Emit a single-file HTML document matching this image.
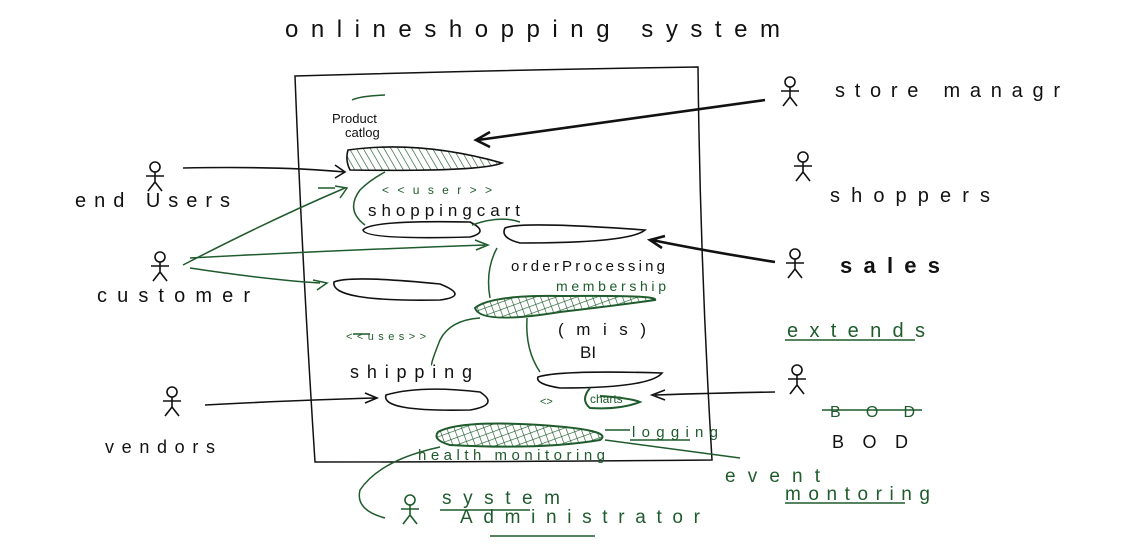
<!DOCTYPE html>
<html><head><meta charset="utf-8"><style>
html,body{margin:0;padding:0;background:#fff;}
svg{display:block}
text{font-family:"Liberation Sans",sans-serif;}
.k{fill:#111}
.g{fill:#1f5b2c}
</style></head><body>
<svg width="1125" height="555" viewBox="0 0 1125 555" xmlns="http://www.w3.org/2000/svg">
<defs>
<pattern id="h" width="6" height="6" patternUnits="userSpaceOnUse" patternTransform="rotate(-30)"><line x1="0" y1="0" x2="0" y2="6" stroke="#1f5b2c" stroke-width="1.3"/></pattern>
<pattern id="x" width="7" height="7" patternUnits="userSpaceOnUse" patternTransform="rotate(-20)"><path d="M0 0V7M0 0H7" stroke="#1f5b2c" stroke-width="1.3"/></pattern>
<g id="act" fill="none" stroke-width="1.6"><circle cx="0" cy="-8" r="5"/><path d="M0 -3V7M-9 1H9M0 7L-7 16M0 7L7 16"/></g>
</defs>
<text x="285" y="37" class="k" font-size="24" textLength="495" lengthAdjust="spacing">onlineshopping  system</text>
<path d="M295 76 Q500 70 698 67 Q700 260 712 460 Q500 462 315 462 Q302 260 295 76Z" fill="none" stroke="#111" stroke-width="1.5"/>
<g fill="none" stroke="#111" stroke-width="1.6">
<path d="M348 150 Q420 140 502 163 Q480 172 350 170 Q345 160 348 150Z" fill="url(#h)"/>
<path d="M363 230 Q370 220 470 222 Q490 232 470 237 Q365 240 363 230Z"/>
<path d="M505 228 Q520 221 645 230 Q630 243 520 243 Q500 238 505 228Z"/>
<path d="M334 282 Q350 275 440 284 Q470 296 440 300 Q330 302 334 282Z"/>
<path d="M538 377 Q560 370 662 373 Q650 388 560 388 Q535 384 538 377Z"/>
<path d="M386 395 Q420 385 480 392 Q500 405 470 410 Q380 412 386 395Z"/>
</g>
<g fill="none" stroke="#1f5b2c" stroke-width="2">
<path d="M475 308 Q490 295 560 296 Q660 295 655 300 Q620 305 560 312 Q480 325 475 308Z" fill="url(#x)"/>
<path d="M438 432 Q460 420 540 425 Q615 430 600 440 Q540 450 450 445 Q432 440 438 432Z" fill="url(#x)"/>
<path d="M590 388 Q580 400 590 408 Q620 410 640 402 Q630 398 600 396"/>
</g>
<text x="332" y="123" class="k" font-size="13">Product</text>
<text x="345" y="137" class="k" font-size="13">catlog</text>
<path d="M352 100 Q360 96 385 95" stroke="#1f5b2c" fill="none" stroke-width="1.5"/>
<text x="382" y="194" class="g" font-size="12" textLength="110" lengthAdjust="spacing">&lt;&lt;user&gt;&gt;</text>
<text x="368" y="216" class="k" font-size="17" textLength="152" lengthAdjust="spacing">shoppingcart</text>
<text x="511" y="271" class="k" font-size="15" textLength="154" lengthAdjust="spacing">orderProcessing</text>
<text x="556" y="291" class="g" font-size="14" textLength="110" lengthAdjust="spacing">membership</text>
<text x="558" y="335" class="k" font-size="17" textLength="88" lengthAdjust="spacing">(mis)</text>
<text x="580" y="358" class="k" font-size="17">BI</text>
<text x="346" y="340" class="g" font-size="11" textLength="80" lengthAdjust="spacing">&lt;&lt;uses&gt;&gt;</text>
<text x="350" y="378" class="k" font-size="18" textLength="122" lengthAdjust="spacing">shipping</text>
<text x="540" y="405" class="g" font-size="11">&lt;&gt;</text>
<text x="590" y="403" class="g" font-size="12">charts</text>
<text x="418" y="460" class="g" font-size="15" textLength="187" lengthAdjust="spacing">health monitoring</text>
<text x="632" y="437" class="g" font-size="15" textLength="86" lengthAdjust="spacing">logging</text>
<g stroke="#111">
<use href="#act" x="790" y="90"/>
<use href="#act" x="803" y="165"/>
<use href="#act" x="155" y="175"/>
<use href="#act" x="160" y="265"/>
<use href="#act" x="172" y="400"/>
<use href="#act" x="797" y="378"/>
</g>
<g stroke="#111" stroke-width="3"><use href="#act" x="795" y="262"/></g>
<g stroke="#1f5b2c"><use href="#act" x="410" y="508"/></g>
<text x="835" y="97" class="k" font-size="20" textLength="225" lengthAdjust="spacing">store managr</text>
<text x="830" y="202" class="k" font-size="20" textLength="160" lengthAdjust="spacing">shoppers</text>
<text x="840" y="273" class="k" font-size="22" font-weight="bold" textLength="100" lengthAdjust="spacing">sales</text>
<text x="75" y="207" class="k" font-size="20" textLength="155" lengthAdjust="spacing">end Users</text>
<text x="97" y="302" class="k" font-size="20" textLength="153" lengthAdjust="spacing">customer</text>
<text x="105" y="453" class="k" font-size="18" textLength="110" lengthAdjust="spacing">vendors</text>
<text x="832" y="448" class="k" font-size="18" textLength="76" lengthAdjust="spacing">BOD</text>
<text x="830" y="417" class="g" font-size="16" textLength="85" lengthAdjust="spacing">BOD</text>
<path d="M822 410 H922" stroke="#1f5b2c" stroke-width="1.5"/>
<text x="787" y="337" class="g" font-size="20" textLength="138" lengthAdjust="spacing">extends</text>
<path d="M785 340 H915" stroke="#1f5b2c" stroke-width="1.5"/>
<text x="725" y="482" class="g" font-size="19" textLength="95" lengthAdjust="spacing">event</text>
<text x="785" y="500" class="g" font-size="19" textLength="145" lengthAdjust="spacing">montoring</text>
<path d="M785 503 H905" stroke="#1f5b2c" stroke-width="1.5"/>
<text x="442" y="504" class="g" font-size="19" textLength="118" lengthAdjust="spacing">system</text>
<text x="460" y="523" class="g" font-size="19" textLength="240" lengthAdjust="spacing">Administrator</text>
<path d="M440 510 H530 M490 536 H595" stroke="#1f5b2c" stroke-width="1.5"/>
<g fill="none" stroke="#111" stroke-width="1.6">
<path d="M183 168 Q280 166 345 172 M335 165 L345 172 L335 178"/>
<path d="M205 405 Q300 400 375 398 M365 393 L377 398 L365 403"/>
<path d="M655 395 Q720 393 775 392 M665 390 L652 395 L665 400"/>
</g>
<g fill="none" stroke="#111" stroke-width="2.6">
<path d="M765 100 Q620 120 478 140 M490 132 L476 140 L490 147"/>
<path d="M775 262 Q700 250 652 240 M665 236 L650 240 L662 248"/>
</g>
<g fill="none" stroke="#1f5b2c" stroke-width="1.5">
<path d="M385 172 Q370 180 360 190 Q345 210 365 225"/>
<path d="M472 225 Q500 215 520 222"/>
<path d="M183 265 Q270 220 345 188 M335 186 L347 188 L340 198"/>
<path d="M190 258 Q340 250 485 245 M475 240 L488 245 L476 250"/>
<path d="M190 268 Q270 280 320 283 M313 280 L327 283 L317 290"/>
<path d="M318 188 H335"/>
<path d="M497 248 Q485 270 490 298"/>
<path d="M480 318 Q450 320 440 340 Q430 365 432 365"/>
<path d="M527 318 Q525 350 540 372"/>
<path d="M605 430 H630"/>
<path d="M605 440 Q680 450 740 458"/>
<path d="M440 447 Q380 460 360 490 Q355 510 385 518"/>
<path d="M353 334 H370"/>
<path d="M630 440 H690"/>
</g>
</svg>
</body></html>
